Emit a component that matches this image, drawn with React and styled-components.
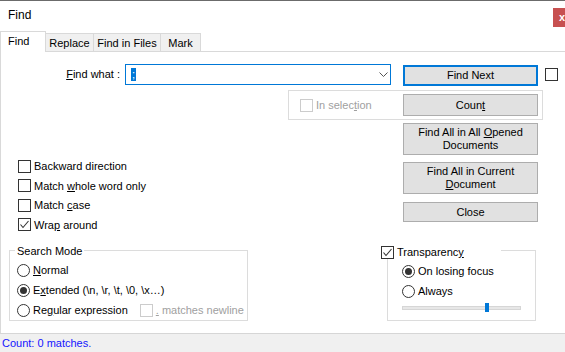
import React from 'react'
import styled, { createGlobalStyle } from 'styled-components'

const Global = createGlobalStyle`
  * { box-sizing: border-box; }
  body { margin: 0; background: #fff; }
`

const Window = styled.div`
  width: 565px;
  height: 352px;
  display: flex;
  flex-direction: column;
  overflow: hidden;
  border-top: 1px solid #6b6b6b;
  background: #fff;
  color: #000;
  font-family: "Liberation Sans", Arial, sans-serif;
  font-size: 11px;
`

const TitleBar = styled.div`
  height: 29px;
  display: flex;
  align-items: flex-start;
  flex: none;
`

const Title = styled.div`
  margin: 7px 0 0 8px;
  font-size: 12px;
  line-height: 14px;
`

const CloseBox = styled.div`
  margin: 7px 0 0 auto;
  width: 12px;
  height: 19px;
  background: #c75050;
  color: #fff;
  font-weight: bold;
  font-size: 11px;
  display: flex;
  align-items: center;
  justify-content: flex-end;
  padding-bottom: 2px;
`

const TabStrip = styled.div`
  height: 22px;
  flex: none;
  display: flex;
  align-items: flex-end;
  border-bottom: 1px solid #d9d9d9;
`

const Tab = styled.div`
  position: relative;
  width: ${(p) => p.$w}px;
  height: ${(p) => (p.$active ? 21 : 18)}px;
  margin-bottom: ${(p) => (p.$active ? -1 : 0)}px;
  margin-left: ${(p) => (p.$first ? 0 : -1)}px;
  z-index: ${(p) => (p.$active ? 1 : 0)};
  background: ${(p) => (p.$active ? '#fff' : '#f0f0f0')};
  border: 1px solid #d9d9d9;
  border-bottom: none;
  display: flex;
  align-items: center;
  justify-content: ${(p) => (p.$active ? 'flex-start' : 'center')};
  padding: ${(p) => (p.$active ? '0 0 2px 7px' : '0')};
`

const Panel = styled.div`
  flex: 1;
  display: flex;
  flex-direction: column;
  border-left: 1px solid #d9d9d9;
`

const TopRow = styled.div`
  display: flex;
  align-items: flex-start;
  margin-top: 12px;
  height: 22px;
`

const FieldLabel = styled.div`
  width: 119px;
  text-align: right;
  line-height: 21px;
`

const Combo = styled.div`
  width: 266px;
  height: 21px;
  margin-left: 5px;
  border: 1px solid #0078d7;
  display: flex;
  align-items: center;
  padding: 0 2px 0 5px;
`

const Selected = styled.span`
  background: #0078d7;
  color: #fff;
  line-height: 13px;
  padding: 0 1px;
`

const Chevron = styled.svg`
  margin-left: auto;
  width: 9px;
  height: 5px;
`

const Button = styled.div`
  width: 135px;
  height: ${(p) => p.$h || 21}px;
  margin-top: ${(p) => p.$mt || 0}px;
  margin-left: ${(p) => p.$ml || 0}px;
  flex: none;
  background: #e1e1e1;
  border: ${(p) => (p.$focus ? '2px solid #0078d7' : '1px solid #adadad')};
  display: flex;
  align-items: center;
  justify-content: center;
  text-align: center;
  line-height: 13px;
`

const Box = styled.span`
  width: 13px;
  height: 13px;
  flex: none;
  margin-top: ${(p) => p.$mt || 0}px;
  margin-left: ${(p) => p.$ml || 0}px;
  border: 1px solid ${(p) => (p.$disabled ? '#cccccc' : '#333')};
  background: #fff;
  display: flex;
  align-items: center;
  justify-content: center;
`

const Round = styled(Box)`
  border-radius: 50%;
`

const Dot = styled.span`
  width: 7px;
  height: 7px;
  border-radius: 50%;
  background: #333;
`

const Middle = styled.div`
  display: flex;
  height: 157px;
`

const LeftCol = styled.div`
  width: 287px;
  padding: 70.5px 0 0 17px;
`

const RightCol = styled.div`
  width: 255px;
  padding-top: 4px;
  display: flex;
  flex-direction: column;
`

const SelGroup = styled.div`
  height: 30px;
  border: 1px solid #dcdcdc;
  display: flex;
  align-items: center;
  padding: 0 4px 0 11px;
`

const Option = styled.label`
  display: flex;
  align-items: center;
  gap: 3px;
  height: ${(p) => p.$h || 20}px;
  margin-left: ${(p) => p.$ml || 0}px;
  color: ${(p) => (p.$disabled ? '#a0a0a0' : '#000')};
  white-space: nowrap;
`

const Muted = styled.span`
  color: #a0a0a0;
`

const Grow = styled.span`
  flex: 1;
`

const BottomRow = styled.div`
  display: flex;
  align-items: flex-start;
  padding-top: 7px;
`

const GroupBox = styled.div`
  position: relative;
  margin-left: ${(p) => p.$ml}px;
  padding: ${(p) => p.$pt}px 0 0 ${(p) => p.$pl}px;
  width: ${(p) => p.$w}px;
  height: 71px;
  border: 1px solid #dcdcdc;
`

const Caption = styled.div`
  position: absolute;
  top: ${(p) => p.$top}px;
  left: ${(p) => p.$left}px;
  width: ${(p) => (p.$w ? `${p.$w}px` : 'auto')};
  height: 14px;
  line-height: 14px;
  padding: 0 2px;
  background: #fff;
  display: flex;
  align-items: center;
  gap: 3px;
  white-space: nowrap;
`

const Slider = styled.div`
  position: relative;
  width: 119px;
  height: 9px;
  margin-top: 2px;
  display: flex;
  align-items: center;
`

const Track = styled.div`
  width: 100%;
  height: 4px;
  background: #e7e7e7;
  border: 1px solid #d6d6d6;
`

const Thumb = styled.div`
  position: absolute;
  left: 83px;
  top: 0;
  width: 4px;
  height: 9px;
  background: #0078d7;
`

const StatusBar = styled.div`
  height: 19px;
  flex: none;
  border-top: 1px solid #d6d6d6;
  background: #f0f0f0;
  color: #1414ff;
  padding-left: 2px;
  line-height: 18px;
`

const Check = ({ checked, disabled, mt, ml }) => (
  <Box $disabled={disabled} $mt={mt} $ml={ml}>
    {checked && (
      <svg width="11" height="11" viewBox="0 0 11 11">
        <path d="M1.5 5.5 L4 8.5 L9.5 2" fill="none" stroke="#333" strokeWidth="1.1" />
      </svg>
    )}
  </Box>
)

const Radio = ({ checked }) => <Round>{checked && <Dot />}</Round>

const tabs = [
  { label: 'Find', w: 46 },
  { label: 'Replace', w: 49 },
  { label: 'Find in Files', w: 68 },
  { label: 'Mark', w: 41 },
]

const options = [
  { key: 'back', label: <>Backward direction</> },
  { key: 'whole', label: <>Match <u>w</u>hole word only</> },
  { key: 'case', label: <>Match <u>c</u>ase</> },
  { key: 'wrap', label: <>Wra<u>p</u> around</>, checked: true },
]

export default function App() {
  return (
    <Window>
      <Global />
      <TitleBar>
        <Title>Find</Title>
        <CloseBox>x</CloseBox>
      </TitleBar>
      <TabStrip>
        {tabs.map((t, i) => (
          <Tab key={t.label} $w={t.w} $active={i === 0} $first={i === 0}>
            {t.label}
          </Tab>
        ))}
      </TabStrip>
      <Panel>
        <TopRow>
          <FieldLabel>
            <u>F</u>ind what :
          </FieldLabel>
          <Combo>
            <Selected>;</Selected>
            <Chevron viewBox="0 0 9 5">
              <path d="M0.5 0.5 L4.5 4.5 L8.5 0.5" fill="none" stroke="#555" strokeWidth="1" />
            </Chevron>
          </Combo>
          <Button $focus $ml={12} $mt={1}>Find Next</Button>
          <Check mt={4} ml={7} />
        </TopRow>

        <Middle>
          <LeftCol>
            {options.map((o) => (
              <Option key={o.key} $h={19.5}>
                <Check checked={o.checked} />
                <span>{o.label}</span>
              </Option>
            ))}
          </LeftCol>
          <RightCol>
            <SelGroup>
              <Check disabled />
              <Option $disabled $h={22} $ml={3}>
                <span>In selec<u>t</u>ion</span>
              </Option>
              <Grow />
              <Button $h={22}>
                <span>Coun<u>t</u></span>
              </Button>
            </SelGroup>
            <Button $h={32} $mt={3} $ml={115}>
              <span>Find All in All <u>O</u>pened<br />Documents</span>
            </Button>
            <Button $h={32} $mt={7} $ml={115}>
              <span>Find All in Current<br /><u>D</u>ocument</span>
            </Button>
            <Button $h={20} $mt={8} $ml={115}>Close</Button>
          </RightCol>
        </Middle>

        <BottomRow>
          <GroupBox $ml={8} $pl={7} $pt={9} $w={239}>
            <Caption $top={-7} $left={5}>Search Mode</Caption>
            <Option>
              <Radio />
              <span><u>N</u>ormal</span>
            </Option>
            <Option>
              <Radio checked />
              <span>E<u>x</u>tended (\n, \r, \t, \0, \x…)</span>
            </Option>
            <Option>
              <Radio />
              <span>Re<u>g</u>ular expression</span>
              <Check disabled ml={9} />
              <Muted><u>.</u> matches newline</Muted>
            </Option>
          </GroupBox>

          <GroupBox $ml={139} $pl={14} $pt={10} $w={149}>
            <Caption $top={-6} $left={-9} $w={122}>
              <Check checked />
              <span>Transparenc<u>y</u></span>
            </Caption>
            <Option>
              <Radio checked />
              <span>On losing focus</span>
            </Option>
            <Option>
              <Radio />
              <span>Always</span>
            </Option>
            <Slider>
              <Track />
              <Thumb />
            </Slider>
          </GroupBox>
        </BottomRow>
      </Panel>
      <StatusBar>Count: 0 matches.</StatusBar>
    </Window>
  )
}
